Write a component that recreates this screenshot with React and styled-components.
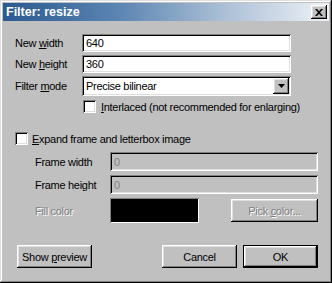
import React from "react";
import styled, { createGlobalStyle } from "styled-components";

const GlobalStyle = createGlobalStyle`
  html, body {
    margin: 0;
    padding: 0;
    background: #ffffff;
  }
  body {
    font-family: "Liberation Sans", Arial, sans-serif;
    font-size: 11px;
    letter-spacing: -0.3px;
    color: #000;
  }
`;

const raised = `
  box-shadow: inset -1px -1px #000, inset 1px 1px #fff,
    inset -2px -2px #808080, inset 2px 2px #dfdfdf;
`;

const sunken = `
  box-shadow: inset 1px 1px #808080, inset -1px -1px #fff,
    inset 2px 2px #000, inset -2px -2px #dfdfdf;
`;

const Window = styled.div`
  width: 332px;
  height: 283px;
  box-sizing: border-box;
  padding: 3px;
  background: #c0c0c0;
  display: flex;
  flex-direction: column;
  box-shadow: inset -1px -1px #000, inset 1px 1px #dfdfdf,
    inset -2px -2px #808080, inset 2px 2px #fff;
`;

const TitleBar = styled.div`
  height: 18px;
  display: flex;
  align-items: center;
  justify-content: space-between;
  padding: 0 2px 0 3px;
  background: linear-gradient(to right, #2a5a90 0%, #5a84b2 35%, #a5bbd3 65%, #eef2f7 100%);
`;

const Title = styled.span`
  color: #fff;
  font-weight: 700;
  font-size: 12.5px;
  letter-spacing: 0;
`;

const CloseButton = styled.div`
  width: 16px;
  height: 14px;
  background: #c0c0c0;
  display: flex;
  align-items: center;
  justify-content: center;
  ${raised}
`;

const Body = styled.div`
  flex: 1;
  display: flex;
  flex-direction: column;
  padding: 13px 11px 12px 12px;
`;

const FieldGrid = styled.div`
  display: grid;
  grid-template-columns: ${(p) => p.$label}px ${(p) => p.$field}px;
  row-gap: ${(p) => p.$gap}px;
  margin-left: ${(p) => p.$indent || 0}px;
  align-items: center;
`;

const Label = styled.span`
  white-space: nowrap;
  color: ${(p) => (p.$disabled ? "#808080" : "#000")};
  text-shadow: ${(p) => (p.$disabled ? "1px 1px #fff" : "none")};
`;

const TextField = styled.div`
  height: ${(p) => p.$h}px;
  box-sizing: border-box;
  padding: 0 4px;
  display: flex;
  align-items: center;
  background: ${(p) => (p.$disabled ? "#c0c0c0" : "#fff")};
  color: ${(p) => (p.$disabled ? "#808080" : "#000")};
  ${sunken}
`;

const Select = styled(TextField)`
  height: 20px;
  padding: 2px 2px 2px 4px;
  justify-content: space-between;
`;

const ArrowButton = styled.div`
  width: 16px;
  height: 16px;
  background: #c0c0c0;
  display: flex;
  align-items: center;
  justify-content: center;
  ${raised}
`;

const CheckRow = styled.label`
  display: flex;
  align-items: center;
  gap: ${(p) => p.$gap}px;
  height: 15px;
  margin-left: ${(p) => p.$indent || 0}px;
  margin-top: ${(p) => p.$top}px;
  margin-bottom: ${(p) => p.$bottom || 0}px;
`;

const CheckBox = styled.span`
  width: 13px;
  height: 13px;
  background: #fff;
  flex: none;
  ${sunken}
`;

const Key = styled.span`
  text-decoration: underline;
`;

const ColorRow = styled.div`
  display: flex;
  align-items: center;
  margin-left: 20px;
  margin-top: 4px;
`;

const ColorLabel = styled(Label)`
  width: 75px;
`;

const Swatch = styled.div`
  width: 89px;
  height: 25px;
  box-sizing: border-box;
  background: #000;
  box-shadow: inset 1px 1px #808080, inset -1px -1px #fff;
`;

const Button = styled.div`
  width: ${(p) => p.$w || 75}px;
  height: 23px;
  box-sizing: border-box;
  display: flex;
  align-items: center;
  justify-content: center;
  background: #c0c0c0;
  color: ${(p) => (p.$disabled ? "#808080" : "#000")};
  text-shadow: ${(p) => (p.$disabled ? "1px 1px #fff" : "none")};
  margin-left: ${(p) => (p.$push ? "auto" : "0")};
  ${(p) =>
    p.$default
      ? `box-shadow: inset 0 0 0 1px #000, inset -2px -2px #000, inset 2px 2px #fff,
    inset -3px -3px #808080, inset 3px 3px #dfdfdf;`
      : raised}
`;

const Footer = styled.div`
  display: flex;
  gap: 6px;
  margin-top: auto;
  padding-left: 2px;
`;

const App = () => (
  <>
    <GlobalStyle />
    <Window>
      <TitleBar>
        <Title>Filter: resize</Title>
        <CloseButton>
          <svg width="8" height="7" viewBox="0 0 8 7">
            <path d="M0 0h2l2 2.2L6 0h2L5 3.5 8 7H6L4 4.8 2 7H0l3-3.5z" fill="#000" />
          </svg>
        </CloseButton>
      </TitleBar>
      <Body>
        <FieldGrid $label={67} $field={209} $gap={3}>
          <Label>
            New <Key>w</Key>idth
          </Label>
          <TextField $h={18}>640</TextField>
          <Label>
            New <Key>h</Key>eight
          </Label>
          <TextField $h={18}>360</TextField>
          <Label>
            Filter <Key>m</Key>ode
          </Label>
          <Select>
            <span>Precise bilinear</span>
            <ArrowButton>
              <svg width="7" height="4" viewBox="0 0 7 4">
                <path d="M0 0h7L3.5 4z" fill="#000" />
              </svg>
            </ArrowButton>
          </Select>
        </FieldGrid>
        <CheckRow $indent={68} $gap={5} $top={3}>
          <CheckBox />
          <span>
            <Key>I</Key>nterlaced (not recommended for enlarging)
          </span>
        </CheckRow>
        <CheckRow $gap={4} $top={17} $bottom={6}>
          <CheckBox />
          <span>
            <Key>E</Key>xpand frame and letterbox image
          </span>
        </CheckRow>
        <FieldGrid $label={75} $field={208} $gap={4} $indent={20}>
          <Label>Frame width</Label>
          <TextField $h={19} $disabled>
            0
          </TextField>
          <Label>Frame height</Label>
          <TextField $h={19} $disabled>
            0
          </TextField>
        </FieldGrid>
        <ColorRow>
          <ColorLabel $disabled>Fill color</ColorLabel>
          <Swatch />
          <Button $w={87} $push $disabled>
            <span>
              Pick <Key>c</Key>olor...
            </span>
          </Button>
        </ColorRow>
        <Footer>
          <Button>
            <span>
              Show <Key>p</Key>review
            </span>
          </Button>
          <Button $push>Cancel</Button>
          <Button $default>OK</Button>
        </Footer>
      </Body>
    </Window>
  </>
);

export default App;
